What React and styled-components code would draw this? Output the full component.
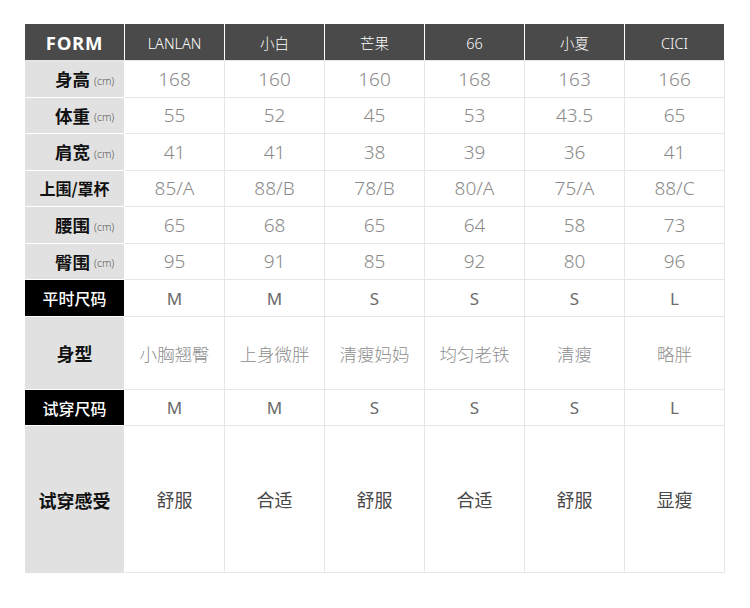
import React from "react";
import styled, { createGlobalStyle } from "styled-components";

const Global = createGlobalStyle`
  html, body { margin: 0; padding: 0; background: #fff; }
  body { font-family: "Noto Sans CJK SC", "Noto Sans", sans-serif; }
`;

const Page = styled.div`
  width: 750px;
  height: 608px;
  padding: 24px 0 0 25px;
  box-sizing: border-box;
`;

const Grid = styled.div`
  display: grid;
  width: 700px;
  grid-template-columns: 100px repeat(6, 100px);
  grid-template-rows: 37px repeat(6, 36.5px) 37px 73px 36px 147px;
`;

const Cell = styled.div`
  box-sizing: border-box;
  display: flex;
  align-items: center;
  justify-content: center;
  border-right: 1px solid #e6e6e6;
  border-bottom: 1px solid #e6e6e6;
  color: #8a8a8a;
  font-family: "Noto Sans", "Noto Sans CJK SC", sans-serif;
  font-size: 19px;
  font-weight: 300;
  white-space: nowrap;
`;

const HeadCell = styled(Cell)`
  background: #4a4a4a;
  color: #fff;
  font-family: "Noto Sans", "Noto Sans CJK SC", sans-serif;
  font-size: 14.5px;
  font-weight: 300;
  border-right: 1px solid #fff;
  border-bottom: 1px solid #e6e6e6;
  padding-top: 1px;
  &:last-child { border-right: 1px solid #4a4a4a; }
`;

const FormCell = styled(HeadCell)`
  font-family: "Open Sans", "Noto Sans", sans-serif;
  font-weight: 700;
  font-size: 18.5px;
  letter-spacing: 0.7px;
  padding-top: 0;
`;

const Label = styled(Cell)`
  font-family: "Noto Sans CJK SC", sans-serif;
  background: ${(p) => (p.$dark ? "#000" : "#e1e1e1")};
  color: ${(p) => (p.$dark ? "#fff" : "#111")};
  font-size: ${(p) => p.$size || "17.5px"};
  font-weight: ${(p) => (p.$dark ? 500 : 700)};
  border-right: 1px solid #fff;
  border-bottom: 1px solid #fff;
  justify-content: ${(p) => (p.$unit ? "flex-start" : "center")};
  padding-left: ${(p) => (p.$unit ? "30px" : "0")};
  &.last { border-bottom: none; }
`;

const Unit = styled.span`
  font-family: "Noto Sans", sans-serif;
  font-size: 10.5px;
  font-weight: 300;
  color: #555;
  margin-left: 4px;
  margin-top: 4px;
`;

const SizeCell = styled(Cell)`
  font-size: 17px;
  font-weight: 400;
  color: #6a6a6a;
`;

const FeelCell = styled(Cell)`
  font-family: "Noto Sans CJK SC", sans-serif;
  font-size: 18px;
  font-weight: 400;
  color: #484848;
`;

const BodyCell = styled(Cell)`
  font-family: "Noto Sans CJK SC", sans-serif;
  font-size: 17.5px;
  font-weight: 300;
  color: #8e8e8e;
`;

const names = ["LANLAN", "小白", "芒果", "66", "小夏", "CICI"];

const numRows = [
  { label: "身高", unit: true, vals: ["168", "160", "160", "168", "163", "166"] },
  { label: "体重", unit: true, vals: ["55", "52", "45", "53", "43.5", "65"] },
  { label: "肩宽", unit: true, vals: ["41", "41", "38", "39", "36", "41"] },
  { label: "上围/罩杯", unit: false, size: "16px", vals: ["85/A", "88/B", "78/B", "80/A", "75/A", "88/C"] },
  { label: "腰围", unit: true, vals: ["65", "68", "65", "64", "58", "73"] },
  { label: "臀围", unit: true, vals: ["95", "91", "85", "92", "80", "96"] },
];

const sizes = ["M", "M", "S", "S", "S", "L"];
const shapes = ["小胸翘臀", "上身微胖", "清瘦妈妈", "均匀老铁", "清瘦", "略胖"];
const feels = ["舒服", "合适", "舒服", "合适", "舒服", "显瘦"];

export default function App() {
  return (
    <Page>
      <Global />
      <Grid>
        <FormCell>FORM</FormCell>
        {names.map((n) => (
          <HeadCell key={n}>{n}</HeadCell>
        ))}

        {numRows.map((r) => (
          <React.Fragment key={r.label}>
            <Label $unit={r.unit} $size={r.size}>
              {r.label}
              {r.unit && <Unit>(cm)</Unit>}
            </Label>
            {r.vals.map((v, i) => (
              <Cell key={i}>{v}</Cell>
            ))}
          </React.Fragment>
        ))}

        <Label $dark $size="16px">平时尺码</Label>
        {sizes.map((s, i) => (
          <SizeCell key={i}>{s}</SizeCell>
        ))}

        <Label $size="18px">身型</Label>
        {shapes.map((s, i) => (
          <BodyCell key={i}>{s}</BodyCell>
        ))}

        <Label $dark $size="16px">试穿尺码</Label>
        {sizes.map((s, i) => (
          <SizeCell key={i}>{s}</SizeCell>
        ))}

        <Label className="last" $size="18px">试穿感受</Label>
        {feels.map((s, i) => (
          <FeelCell key={i}>{s}</FeelCell>
        ))}
      </Grid>
    </Page>
  );
}
